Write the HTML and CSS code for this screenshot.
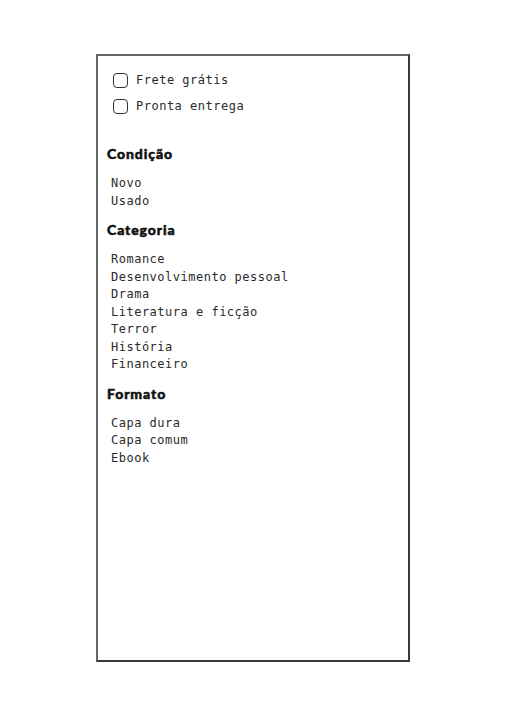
FILE: index.html
```html
<!DOCTYPE html>
<html lang="pt-BR">
<head>
<meta charset="utf-8">
<title>Filtros</title>
<link rel="stylesheet" href="styles.css">
</head>
<body>
<aside class="panel">
  <div class="checks">
    <label class="check"><span class="box"></span><span class="check-label">Frete grátis</span></label>
    <label class="check"><span class="box"></span><span class="check-label">Pronta entrega</span></label>
  </div>
  <section class="group">
    <h2 class="group-title">Condição</h2>
    <ul class="options">
      <li>Novo</li>
      <li>Usado</li>
    </ul>
  </section>
  <section class="group">
    <h2 class="group-title">Categoria</h2>
    <ul class="options">
      <li>Romance</li>
      <li>Desenvolvimento pessoal</li>
      <li>Drama</li>
      <li>Literatura e ficção</li>
      <li>Terror</li>
      <li>História</li>
      <li>Financeiro</li>
    </ul>
  </section>
  <section class="group">
    <h2 class="group-title">Formato</h2>
    <ul class="options">
      <li>Capa dura</li>
      <li>Capa comum</li>
      <li>Ebook</li>
    </ul>
  </section>
</aside>
</body>
</html>
```

FILE: styles.css
```css
html, body {
  margin: 0;
  padding: 0;
  background: #ffffff;
}

body {
  font-family: "DejaVu Sans Mono", "Liberation Mono", monospace;
  color: #2a2a2a;
}

.panel {
  box-sizing: border-box;
  width: 314px;
  height: 608px;
  margin: 54px 0 0 96px;
  border: 2px solid #3a3a3a;
  border-top-color: #666666;
  border-left-color: #666666;
  padding: 16px 10px 0 9px;
}

.checks {
  display: flex;
  flex-direction: column;
  gap: 10px;
  padding-left: 6px;
}

.check {
  display: flex;
  align-items: center;
  gap: 8px;
  height: 16px;
}

.box {
  box-sizing: border-box;
  width: 15px;
  height: 15px;
  border: 1.5px solid #333;
  border-radius: 4px;
}

.check-label {
  font-size: 12px;
  letter-spacing: 0.5px;
}

.group {
  margin-top: 31px;
}

.group + .group {
  margin-top: 11px;
}

.group-title {
  margin: 0 0 12px 0;
  font-family: Lato, "Noto Sans", sans-serif;
  font-weight: 900;
  font-size: 14px;
  letter-spacing: 0.9px;
  line-height: 18px;
  color: #111111;
  -webkit-text-stroke: 0.5px #111111;
}

.options {
  list-style: none;
  margin: 0;
  padding: 0 0 0 4px;
  font-size: 12px;
  letter-spacing: 0.5px;
  line-height: 17.5px;
}
```
